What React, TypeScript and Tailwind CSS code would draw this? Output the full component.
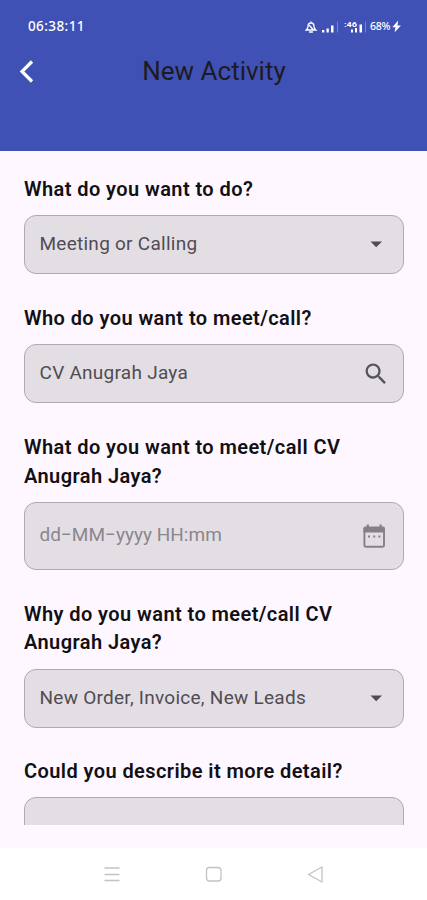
import { ReactNode } from "react";

function Label({ children }: { children: ReactNode }) {
  return (
    <h2 className="whitespace-nowrap pl-[0.5px] text-[20px] leading-[28.5px] font-semibold tracking-[0.42px] text-[#111014]">
      {children}
    </h2>
  );
}

function Field({ children, icon, tall = false }: { children?: ReactNode; icon?: ReactNode; tall?: boolean }) {
  return (
    <div
      className={`flex shrink-0 items-center justify-between rounded-xl border border-[#aeaab0] bg-[#e3dee4] pl-[15px] pr-[15px] ${
        tall ? "h-[68px]" : "h-[59px]"
      }`}
    >
      {children}
      {icon}
    </div>
  );
}

function Value({ children }: { children: ReactNode }) {
  return <span className="whitespace-nowrap text-[19px] tracking-[0.26px] text-[#504c52]">{children}</span>;
}

function Caret() {
  return (
    <svg className="h-6 w-6 text-[#4f4b52]" viewBox="0 0 24 24" fill="currentColor">
      <path d="M6.500 9.500h11.500L12.200 15.300z" />
    </svg>
  );
}

function Search() {
  return (
    <svg className="-mr-[2px] mt-px h-7 w-7 text-[#57535a]" viewBox="0 0 24 24" fill="currentColor">
      <path d="M15.500 14h-.79l-.28-.27A6.471 6.471 0 0 0 16 9.500 6.500 6.500 0 1 0 9.500 16c1.610 0 3.090-.59 4.230-1.570l.27.28v.79l5 4.990L20.490 19l-4.990-5zm-6 0C7.010 14 5 11.990 5 9.500S7.010 5 9.500 5 14 7.010 14 9.500 11.990 14 9.500 14z" />
    </svg>
  );
}

function Calendar() {
  return (
    <svg className="mr-[2px] mt-[1px] h-[25px] w-[24px] text-[#858087]" viewBox="0 0 24 25">
      <rect x="2.400" y="4" width="19.600" height="18.800" rx="1.800" fill="none" stroke="currentColor" strokeWidth="1.900" />
      <path d="M1.400 4.500Q1.400 2.500 3.200 2.500h18q1.800 0 1.800 2V8.500H1.400zM4.700 0.500h2.200V4H4.700zM17.500 0.500h2.200V4h-2.200z" fill="currentColor" />
      <path d="M6 11.500h2v2H6zM11.200 11.500h2v2h-2zM16.400 11.500h2v2h-2z" fill="currentColor" />
    </svg>
  );
}

function StatusIcons() {
  return (
    <div className="flex items-center text-white">
      <svg className="h-[14px] w-[64px]" viewBox="0 0 64 14" fill="currentColor">
        <path d="M1.200 10Q3 8.500 3 6.500q0-3.500 3-3.500t3 3.500q0 2 1.800 3.500zM6 3V1.800M4.500 12h3M4.500 5.500l4 4.500" fill="none" stroke="currentColor" strokeWidth="1.300" strokeLinecap="round" />
        <path d="M17 10h2.300v2.500H17zM21.500 8.500h2.300v4h-2.300zM26 5.500h2.500v7H26z" />
        <path d="M32 1.500h1v11h-1z" opacity=".3" />
        <text x="39" y="6.800" fontSize="7" fontWeight="700" textLength="13" lengthAdjust="spacingAndGlyphs">:46</text>
        <path d="M46 9.500h2v3h-2zM50 8h2v4.500h-2zM54.500 4.500h2.500v8h-2.500z" />
        <path d="M60 1.500h1v11h-1z" opacity=".3" />
      </svg>
      <span className="w-[23px] whitespace-nowrap pl-px font-['Noto_Sans',sans-serif] text-[10.500px] font-medium leading-none tracking-[-0.3px]">68%</span>
      <svg className="h-[13px] w-[9px]" viewBox="0 0 9 13" fill="currentColor">
        <path d="M6.200 0.500L0.300 7.200h3.200L2.500 12.500 8.900 5.500H5.500z" />
      </svg>
    </div>
  );
}

export default function App() {
  return (
    <div className="flex h-[900px] w-[427px] flex-col overflow-hidden bg-[#fef7ff] font-['Roboto',sans-serif]">
      <header className="h-[151px] shrink-0 bg-[#3f51b5]">
        <div className="flex h-[53px] items-center justify-between pl-[28px] pr-[26px]">
          <span className="font-['Noto_Sans',sans-serif] text-[13.500px] font-medium leading-none tracking-[0.400px] text-white">06:38:11</span>
          <StatusIcons />
        </div>
        <div className="grid h-[36px] grid-cols-[56px_1fr_55px] items-center">
          <svg className="ml-[18px] h-[26px] w-[18px]" viewBox="0 0 18 26" fill="none" stroke="white" strokeWidth="3.200">
            <path d="M14 3.500L4 13.500 14 23.500" />
          </svg>
          <h1 className="whitespace-nowrap text-center text-[26px] leading-9 text-[#1d1b20]">New Activity</h1>
        </div>
      </header>

      <main className="flex h-[674px] shrink-0 flex-col overflow-hidden px-[23.500px] pt-[24px]">
        <section className="flex shrink-0 flex-col gap-[11px]">
          <Label>What do you want to do?</Label>
          <Field icon={<Caret />}><Value>Meeting or Calling</Value></Field>
        </section>

        <section className="mt-[30.500px] flex shrink-0 flex-col gap-[11px]">
          <Label>Who do you want to meet/call?</Label>
          <Field icon={<Search />}><Value>CV Anugrah Jaya</Value></Field>
        </section>

        <section className="mt-[30.500px] flex shrink-0 flex-col gap-3">
          <Label>What do you want to meet/call CV<br />Anugrah Jaya?</Label>
          <Field tall icon={<Calendar />}>
            <span className="-mt-[2px] whitespace-nowrap text-[19px] tracking-[0.020px] text-[#8b868d]">dd−MM−yyyy HH:mm</span>
          </Field>
        </section>

        <section className="mt-[29.500px] flex shrink-0 flex-col gap-3">
          <Label>Why do you want to meet/call CV<br />Anugrah Jaya?</Label>
          <Field icon={<Caret />}><Value>New Order, Invoice, New Leads</Value></Field>
        </section>

        <section className="mt-[29.500px] flex shrink-0 flex-col gap-[11.500px]">
          <Label>Could you describe it more detail?</Label>
          <Field tall />
        </section>
      </main>

      <nav className="mt-[23px] grid h-[52px] shrink-0 grid-cols-3 bg-white px-[61px]">
        <svg className="mt-[16px] h-5 w-5 justify-self-center" viewBox="0 0 20 20" stroke="#c4c2c5" strokeWidth="1.300">
          <path d="M2.500 4h15M2.500 10.500h15M2.500 16.500h15" />
        </svg>
        <svg className="mt-[16px] h-5 w-5 justify-self-center" viewBox="0 0 20 20" fill="none" stroke="#c4c2c5" strokeWidth="1.300">
          <rect x="3.500" y="3.500" width="14.500" height="13.500" rx="3" />
        </svg>
        <svg className="mt-[16px] h-5 w-5 justify-self-center" viewBox="0 0 20 20" fill="none" stroke="#c4c2c5" strokeWidth="1.300" strokeLinejoin="round">
          <path d="M3.500 10.500L17 3v15z" />
        </svg>
      </nav>
    </div>
  );
}
